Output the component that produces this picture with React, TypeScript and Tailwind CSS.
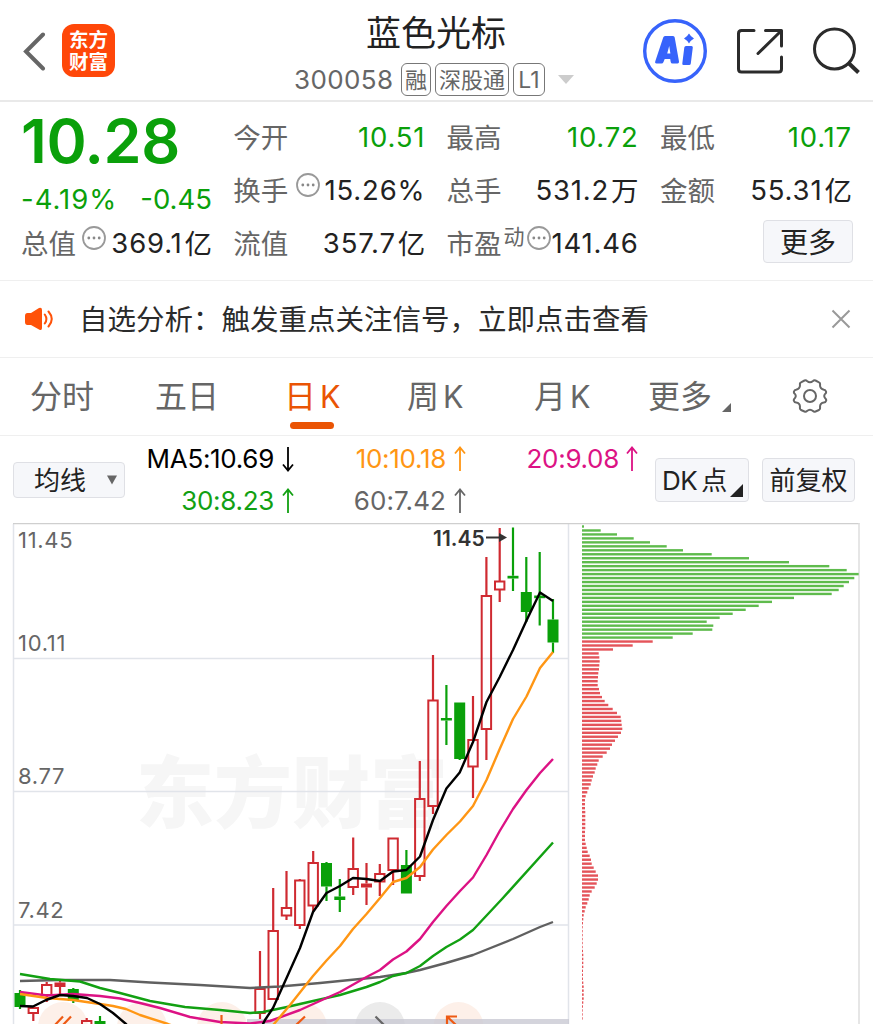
import type { ReactNode } from "react";

const GREEN = "#0aa00a";
const RED = "#cf2a31";

type Candle = {
  x: number;
  high: number;
  top: number;
  bottom: number;
  low: number;
  kind: "up" | "down" | "upFlat";
};

const candles: Candle[] = [
  { x: 20, high: 990, top: 993, bottom: 1007, low: 1009, kind: "down" },
  { x: 33.3, high: 1008, top: 1008, bottom: 1013, low: 1021, kind: "up" },
  { x: 46.7, high: 982, top: 985, bottom: 995, low: 1002, kind: "up" },
  { x: 60, high: 980, top: 982.5, bottom: 987, low: 994, kind: "upFlat" },
  { x: 73.3, high: 988, top: 989, bottom: 1001, low: 1003, kind: "down" },
  { x: 86.7, high: 1018, top: 1021, bottom: 1034, low: 1040, kind: "up" },
  { x: 100, high: 1016, top: 1021, bottom: 1034, low: 1040, kind: "down" },
  { x: 260, high: 951, top: 989, bottom: 1013, low: 1019, kind: "up" },
  { x: 273.2, high: 888, top: 931, bottom: 999, low: 999, kind: "up" },
  { x: 286.5, high: 871, top: 908, bottom: 915.5, low: 920, kind: "up" },
  { x: 299.8, high: 879, top: 880.5, bottom: 925, low: 929, kind: "up" },
  { x: 313.2, high: 851, top: 863, bottom: 905.5, low: 912, kind: "up" },
  { x: 326.5, high: 862, top: 863, bottom: 886.5, low: 901, kind: "down" },
  { x: 339.8, high: 879, top: 896.5, bottom: 900, low: 912, kind: "down" },
  { x: 353.2, high: 837.5, top: 869, bottom: 887, low: 895, kind: "up" },
  { x: 366.5, high: 863, top: 883.5, bottom: 887.5, low: 905, kind: "upFlat" },
  { x: 379.8, high: 864, top: 874, bottom: 881.5, low: 896, kind: "up" },
  { x: 393.1, high: 838, top: 838.5, bottom: 870, low: 885, kind: "up" },
  { x: 406.4, high: 850, top: 865, bottom: 893.5, low: 893.5, kind: "down" },
  { x: 419.8, high: 761, top: 799, bottom: 876, low: 881, kind: "up" },
  { x: 433, high: 655, top: 700.5, bottom: 806, low: 814, kind: "up" },
  { x: 446.4, high: 685, top: 718, bottom: 720.5, low: 745, kind: "down" },
  { x: 459.7, high: 702.5, top: 702.5, bottom: 759, low: 760, kind: "down" },
  { x: 473, high: 696, top: 740, bottom: 766.5, low: 798, kind: "up" },
  { x: 486.4, high: 557, top: 596, bottom: 729, low: 760, kind: "up" },
  { x: 499.7, high: 528, top: 581.5, bottom: 589.5, low: 602, kind: "up" },
  { x: 513, high: 527.5, top: 575.8, bottom: 578.5, low: 591, kind: "down" },
  { x: 526.3, high: 557, top: 592, bottom: 612, low: 622, kind: "down" },
  { x: 539.7, high: 552, top: 595.5, bottom: 598.2, low: 625.5, kind: "down" },
  { x: 553, high: 599, top: 619.5, bottom: 642.5, low: 653, kind: "down" },
];

const maLines = [
  {
    color: "#606060",
    points:
      "20,981 60,980 110,980 150,982.5 200,985 250,988 280,986.5 320,983 380,977 406,973 420,970 446,963 473,955 513,939 540,927 553,922",
  },
  {
    color: "#12a012",
    points:
      "20,974 50,979 80,981.5 100,988 120,993 150,1001 185,1007 220,1010 250,1013 263,1012 287,1007 313,1001 340,995 366.5,987 380,982 393,976 406.4,973 420,966 433,956 446.4,947 460,939.5 473,930 502,899 553,842.5",
  },
  {
    color: "#dc1284",
    points:
      "20,992 47,995.5 73,994 100,996 120,998.5 140,1003 160,1008 190,1017 220,1022 250,1023.5 270,1021 300,1010 326.5,998 340,992 366.5,977 380,970 393,959.5 406.4,951.5 420,939 433,922 446.4,906 460,891 473,877.5 486.5,855 499.7,831 513,809 526.5,790 540,773 553,759",
  },
  {
    color: "#ff9614",
    points:
      "20,994 47,998 73,1000 100,1004 113,1006 126,1009 140,1015 168,1024 220,1044 260,1040 274,1024 290,1005 313,976 326.5,960.5 340,946 353,929 366.5,914 380,898 393,882 406.4,878 420,867 433,849.5 446.4,835 460,821.5 473,806 486.5,780 499.7,749 513,719 526.5,696.5 540,668 553,652",
  },
  {
    color: "#000000",
    points:
      "20,1006 33,1006.5 46,1000 60,995 73,996 87,998 100,1004 113,1013 126,1024 160,1060 250,1050 265,1020 273,1008 287,977 300,948 313,912 326.5,893 340,886 353,878 366.5,879 380,881 393,871.5 406.4,870 420,856.5 433,820 446.4,788.5 459.7,772.5 473,742 486.5,702 499.7,677 513,650 526.5,620.5 540,592.5 553,601",
  },
];

const profitChips = [
  2, 18.7, 35, 51.7, 68, 84.7, 101, 129.7, 167, 207, 247.3, 264.7, 276.7, 272.3,
  267, 261.7, 256.7, 249.7, 212, 190, 176.7, 163.7, 150.7, 137.7, 124.7, 131.3,
  130.3, 110.7, 90.7,
];

const lossChips = [
  70.7, 50.7, 31, 16.7, 17.3, 17.7, 17.3, 17, 16.3, 16, 15.7, 15.7, 17, 18, 20,
  22.7, 26.3, 30.7, 35, 38.7, 39.3, 39.7, 40.3, 39, 36, 33, 30, 28, 24.7, 20.7,
  16.7, 15.3, 13.7, 12.7, 11, 9.7, 8.7, 6.7, 5.3, 3.7, 3, 3, 3, 3.3, 3.3, 3.3,
  3.3, 3.3, 3, 3, 3, 3.7, 4.7, 5.7, 7.7, 9, 9.7, 11.7, 13.7, 16, 16, 14.7, 12.7,
  9.7, 7.7, 6.7, 5.3, 3.7, 2.7, 1.7, 1.3, 1, 0.7, 0.7, 0.7, 0.7, 0.7, 0.7, 1,
  1.3, 1.3, 1.3, 1.3, 1, 1, 1, 1.3, 1.7, 1.7, 1.7, 1.7, 1.3, 1, 0.7, 0.7, 0.7,
];

const chips = [...profitChips, ...lossChips];

const gridLabels = [
  { text: "11.45", y: 548 },
  { text: "10.11", y: 651 },
  { text: "8.77", y: 784 },
  { text: "7.42", y: 918 },
];

function MoreDots({ className }: { className?: string }) {
  return (
    <svg viewBox="0 0 24 24" className={`h-6 w-6 shrink-0 ${className ?? ""}`}>
      <circle cx="12" cy="12" r="11" fill="none" stroke="#999" strokeWidth="1.8" />
      <circle cx="6.800" cy="12" r="1.400" fill="#888" />
      <circle cx="12" cy="12" r="1.400" fill="#888" />
      <circle cx="17.200" cy="12" r="1.400" fill="#888" />
    </svg>
  );
}

function Arrow({ down = false }: { down?: boolean }) {
  return (
    <svg
      viewBox="0 0 12 26"
      className={`mr-px h-[26px] w-3 shrink-0 ${down ? "rotate-180" : ""}`}
      fill="none"
      stroke="currentColor"
      strokeWidth="1.800"
    >
      <path d="M6 25V1.500M1 7.500L6 1.500L11 7.500" />
    </svg>
  );
}

function Stat({
  label,
  value,
  unit,
  green = false,
  extra,
}: {
  label: string;
  value: string;
  unit?: string;
  green?: boolean;
  extra?: ReactNode;
}) {
  return (
    <div className="flex h-[53px] items-center justify-between whitespace-nowrap">
      <span className="flex items-center pt-0.5 text-[27.5px] text-[#666]">
        {label}
        {extra}
      </span>
      <span
        className={`flex items-center text-[27.5px] tracking-[0.8px] ${green ? "text-[#0aa00a]" : "text-[#222]"}`}
      >
        {value}
        {unit && <span className="ml-0.5 pt-0.5 tracking-normal">{unit}</span>}
      </span>
    </div>
  );
}

function Header() {
  return (
    <header className="flex h-[102px] items-start border-b-2 border-[#e9e9e9]">
      <svg viewBox="0 0 24 40" className="mt-8 ml-[22px] h-10 w-6" fill="none">
        <path d="M21 2.500L4 19.500L21 36.500" stroke="#666" strokeWidth="4" strokeLinecap="round" />
      </svg>
      <div className="mt-6 ml-4 flex h-[53px] w-[53px] flex-col items-center justify-center rounded-xl bg-[#ff4709] text-[19.5px] leading-[22px] font-bold text-white">
        <span>东方</span>
        <span>财富</span>
      </div>

      <div className="ml-[179px] w-[286px]">
        <h1 className="mt-[11px] ml-[72px] text-[35px] leading-[44px] text-[#222]">蓝色光标</h1>
        <div className="mt-[7px] flex h-[34px] items-center text-[#666]">
          <span className="w-[107px] text-[26px] tracking-[0.4px]">300058</span>
          <span className="flex h-[33px] w-[30px] items-center justify-center rounded-md border border-[#777] pt-0.5 text-[22px]">
            融
          </span>
          <span className="ml-1 flex h-[33px] w-[74px] items-center justify-center rounded-md border border-[#777] pt-0.5 text-[22px] whitespace-nowrap">
            深股通
          </span>
          <span className="ml-1 flex h-[33px] w-[32px] items-center justify-center rounded-md border border-[#777] pt-0.5 text-[23px]">
            L1
          </span>
          <svg viewBox="0 0 16 9" className="ml-[13px] h-[9px] w-4">
            <path d="M0 0h16L8 9z" fill="#ccc" />
          </svg>
        </div>
      </div>

      <svg viewBox="0 0 64 64" className="mt-[19px] ml-[63px] h-16 w-16 shrink-0">
        <circle cx="32" cy="32" r="30.300" fill="none" stroke="#3763fb" strokeWidth="3.400" />
        <path
          d="M22 17h8q1.500 0 1.700 1.500l4.300 24q.2 2-1.500 2h-5q-1.500 0-1.800-1.500l-.5-3h-5.500l-1.200 3q-.6 1.500-2 1.500h-5q-2 0-1.300-2l8-24q.5-1.500 1.800-1.500zM26.200 27l-2 7.500h3.200z"
          fill="#3763fb"
        />
        <path
          d="M43 27h5.500q1.500 0 1.300 1.500l-2 16q-.2 1.500-1.700 1.500h-5.500q-1.500 0-1.300-1.500l2-16q.2-1.500 1.700-1.500zM46 14.500q1.800 3.200 5 5q-3.200 1.800-5 5q-1.800-3.200-5-5q3.200-1.800 5-5z"
          fill="#3763fb"
        />
      </svg>
      <svg
        viewBox="0 0 46 46"
        className="mt-7 ml-[30px] h-[46px] w-[46px] shrink-0"
        fill="none"
        stroke="#2b2b2b"
        strokeWidth="3"
        strokeLinecap="round"
        strokeLinejoin="round"
      >
        <path d="M17 2.500H4.500Q1.500 2.500 1.500 5.500V41Q1.500 44 4.500 44H41.500Q44.500 44 44.500 41V29M28.500 2.500H44.500V18M44 3L21 25.500" />
      </svg>
      <svg
        viewBox="0 0 48 48"
        className="mt-[27px] ml-[30px] h-12 w-12 shrink-0"
        fill="none"
        stroke="#2b2b2b"
      >
        <circle cx="21.500" cy="22" r="20" strokeWidth="3" />
        <path d="M36 36.500L45.500 45.500" strokeWidth="4" />
      </svg>
    </header>
  );
}

function Quote() {
  return (
    <section className="grid h-[178px] grid-cols-[191px_192px_192px_192px] gap-x-[21.3px] pt-[9px] pl-[21px]">
      <div>
        <div className="h-[60px] text-[61px] leading-[60px] font-semibold tracking-[-0.4px] text-[#0aa00a]">
          10.28
        </div>
        <div className="flex h-[46px] items-center justify-between pt-[11px] text-[27.5px] text-[#0aa00a]">
          <span className="tracking-[1px]">-4.19%</span>
          <span>-0.45</span>
        </div>
        <Stat label="总值" value="369.1" unit="亿" extra={<MoreDots className="-mt-3.5 ml-1.5" />} />
      </div>
      <div>
        <Stat label="今开" value="10.51" green />
        <Stat label="换手" value="15.26%" extra={<MoreDots className="-mt-3.5 ml-2" />} />
        <Stat label="流值" value="357.7" unit="亿" />
      </div>
      <div>
        <Stat label="最高" value="10.72" green />
        <Stat label="总手" value="531.2" unit="万" />
        <Stat
          label="市盈"
          value="141.46"
          extra={
            <>
              <span className="-mt-4 ml-0.5 text-[21px]">动</span>
              <MoreDots className="-mt-3.5 ml-0.5" />
            </>
          }
        />
      </div>
      <div>
        <Stat label="最低" value="10.17" green />
        <Stat label="金额" value="55.31" unit="亿" />
        <button
          type="button"
          className="mt-[3px] ml-[103px] flex h-[43px] w-[90px] items-center justify-center rounded-[4px] border border-[#dfe0e5] bg-[#f6f7fa] pt-0.5 text-[28px] text-[#222]"
        >
          更多
        </button>
      </div>
    </section>
  );
}

function Notice() {
  return (
    <section className="flex h-[78px] items-center border-y border-[#efefef]">
      <svg viewBox="0 0 30 24" className="ml-[25px] h-6 w-[30px]" fill="none">
        <path
          d="M2.500 6H6L14 1Q17 0 17 3V21Q17 24 14 22.500L6 18H2.500Q0 18 0 15V9Q0 6 2.500 6z"
          fill="#ff5209"
        />
        <path
          d="M19.800 7.500Q23 12 19.800 16.500M23.500 4.500Q30 12 23.500 19.500"
          stroke="#ff5209"
          strokeWidth="2"
          strokeLinecap="round"
        />
      </svg>
      <span className="ml-6 w-[752px] pt-0.5 text-[28.5px] whitespace-nowrap text-[#2b2b2b]">
        自选分析：触发重点关注信号，立即点击查看
      </span>
      <svg viewBox="0 0 20 20" className="h-5 w-5" stroke="#999" strokeWidth="2">
        <path d="M1.500 1.500L18.500 18.500M18.500 1.500L1.500 18.500" />
      </svg>
    </section>
  );
}

function KTab({ label }: { label: string }) {
  return (
    <span className="flex h-[46px] items-center gap-1">
      {label}
      <span className="text-[30.5px]">K</span>
    </span>
  );
}

function Tabs() {
  return (
    <nav className="flex h-[78px] items-start border-b border-[#efefef] pt-4 text-[32px] leading-[46px] whitespace-nowrap text-[#666]">
      <span className="ml-[30px] w-[125px]">分时</span>
      <span className="w-[129px]">五日</span>
      <span className="w-[123px] text-[#ea5404]">
        <KTab label="日" />
        <span className="mt-0.5 ml-[6px] block h-[7px] w-11 rounded-full bg-[#ea5404]" />
      </span>
      <span className="w-[127px]">
        <KTab label="周" />
      </span>
      <span className="w-[114px]">
        <KTab label="月" />
      </span>
      <span className="flex w-36">
        更多
        <svg viewBox="0 0 10 10" className="mt-[29px] ml-[10px] h-[9px] w-[9px]">
          <path d="M10 0V10H0z" fill="#666" />
        </svg>
      </span>
      <svg viewBox="0 0 36 34" className="mt-[5px] h-[34px] w-9" fill="none" stroke="#666" strokeWidth="2">
        <path
          d="M12.500 1.500Q14 1 15 2Q18 4.500 21 2Q22 1 23.500 1.500L27 3.300Q28.500 4 28 6Q28 10 32 10.800Q33.500 11 34 12.500Q34.500 14 33 15Q31.500 17 33 19Q34.800 20.500 34 22Q33.500 23.500 32 23.500Q28 24 28 28Q28.500 30 27 31L23.500 32.500Q22 33 21 32Q18 29.500 15 32Q14 33 12.500 32.500L9 31Q7.500 30 8 28Q8 24 4 23.500Q2.500 23.500 2 22Q1.200 20.500 3 19Q4.500 17 3 15Q1.500 14 2 12.500Q2.500 11 4 10.800Q8 10 8 6Q7.500 4 9 3.300z"
          strokeLinejoin="round"
        />
        <circle cx="18" cy="17" r="6" />
      </svg>
    </nav>
  );
}

function MaBar() {
  return (
    <section className="flex h-[87px] items-start text-[26px] whitespace-nowrap">
      <button
        type="button"
        className="mt-[26px] ml-[13px] flex h-9 w-[112px] items-center rounded-[4px] border border-[#dfe0e5] bg-[#f6f7fa] pl-5 text-[26px] text-[#222]"
      >
        均线
        <svg viewBox="0 0 10 10" className="ml-[21px] h-[10px] w-[10px]">
          <path d="M0 0.500H10L5 9.500z" fill="#666" />
        </svg>
      </button>
      <div className="grid w-[515px] grid-cols-[170px_172px_172px] pt-0.5 leading-[42px] tracking-[-0.3px]">
        <span className="flex items-center justify-end gap-2 text-black">
          MA5:10.69 <Arrow down />
        </span>
        <span className="flex items-center justify-end gap-2 text-[#ff9614]">
          10:10.18 <Arrow />
        </span>
        <span className="flex items-center justify-end gap-[7px] text-[#dc1284]">
          20:9.08 <Arrow />
        </span>
        <span className="flex items-center justify-end gap-2 text-[#12a012]">
          30:8.23 <Arrow />
        </span>
        <span className="flex items-center justify-end gap-2 tracking-[0.1px] text-[#666]">
          60:7.42 <Arrow />
        </span>
      </div>
      <button
        type="button"
        className="mt-[22px] ml-[15px] flex h-11 w-[94px] items-center rounded-[4px] border border-[#dfe0e5] bg-[#f6f7fa] pl-1.5 text-[26px] text-[#222]"
      >
        <span className="tracking-[-0.5px]">DK</span>
        <span className="ml-1">点</span>
        <svg viewBox="0 0 13 13" className="mt-5 ml-[3px] h-[13px] w-[13px] shrink-0">
          <path d="M13 0V13H0z" fill="#222" />
        </svg>
      </button>
      <button
        type="button"
        className="mt-[22px] ml-[13px] flex h-11 w-[93px] items-center justify-center rounded-[4px] border border-[#dfe0e5] bg-[#f6f7fa] text-[26px] text-[#222]"
      >
        前复权
      </button>
    </section>
  );
}

function CandleShape({ x, high, top, bottom, low, kind }: Candle) {
  const color = kind === "down" ? GREEN : RED;
  const hollow = kind === "up";
  return (
    <g stroke={color} strokeWidth="2.200">
      <path d={`M${x} ${high}V${top}M${x} ${bottom}V${low}`} />
      {hollow ? (
        <rect x={x - 4.7} y={top} width="9.400" height={bottom - top} fill="none" strokeWidth="2" />
      ) : (
        <rect x={x - 5.5} y={top} width="11" height={bottom - top} fill={color} stroke="none" />
      )}
    </g>
  );
}

function Chart() {
  return (
    <svg viewBox="0 523 873 501" className="block h-[501px] w-[873px]">
      <defs>
        <clipPath id="plot">
          <rect x="14" y="524" width="555" height="500" />
        </clipPath>
      </defs>

      <text x="136" y="822" fontSize="78" fontWeight="800" fill="#f6f6f6">
        东方财富
      </text>

      <g stroke="#e1e4ea" strokeWidth="1.500">
        <path d="M14 658.500H568M14 791.500H568M14 925H568M13.500 524V1024M568.500 524V1024" />
      </g>
      <path d="M13 523.500H859.500" stroke="#cfcfcf" strokeWidth="1.500" />
      <path d="M859 523V1024" stroke="#dedede" strokeWidth="1.500" />

      {chips.map((w, i) => (
        <rect
          key={i}
          x="582"
          y={525.3 + i * 3.967}
          width={w}
          height="2.400"
          fill={i < profitChips.length ? "#5fbb4d" : "#e4545a"}
        />
      ))}

      <g clipPath="url(#plot)">
        {[63, 142, 222, 302, 458.5].map((cx) => (
          <circle key={cx} cx={cx} cy="1027" r="25" fill="#fdf0e9" />
        ))}
        <circle cx="380" cy="1027" r="25" fill="#ebebeb" />
        <rect x="247" y="1019" width="322" height="5" fill="#c9c9d3" fillOpacity="0.8" />

        {candles.map((c) => (
          <CandleShape key={c.x} {...c} />
        ))}
        {maLines.map((l) => (
          <polyline
            key={l.color}
            points={l.points}
            fill="none"
            stroke={l.color}
            strokeWidth="2.400"
            strokeLinejoin="round"
          />
        ))}

        <g fill="none" stroke="#ee5a14" strokeWidth="2.200">
          <path d="M63 1016.500L54 1026M71 1016.500L62 1026M221.500 1015V1026M305 1016.500L295 1026" />
          <path d="M447 1026V1016.500H457M447 1016.500L457 1026" />
        </g>
        <path d="M375.500 1016.500L385 1026" fill="none" stroke="#666" strokeWidth="2.200" />
      </g>

      <g fontSize="22" fill="#666" letterSpacing="0.7">
        {gridLabels.map((l) => (
          <text key={l.text} x="18" y={l.y}>
            {l.text}
          </text>
        ))}
      </g>
      <text x="433" y="545.500" fontSize="21" fontWeight="600" fill="#333">
        11.45
      </text>
      <path d="M486 537.500H501" stroke="#333" strokeWidth="2" />
      <path d="M499 533L507 537.500L499 542z" fill="#333" />
    </svg>
  );
}

export default function App() {
  return (
    <main className="h-[1024px] w-[873px] overflow-hidden bg-white font-['Inter','Noto_Sans_CJK_SC',sans-serif]">
      <Header />
      <Quote />
      <Notice />
      <Tabs />
      <MaBar />
      <Chart />
    </main>
  );
}
